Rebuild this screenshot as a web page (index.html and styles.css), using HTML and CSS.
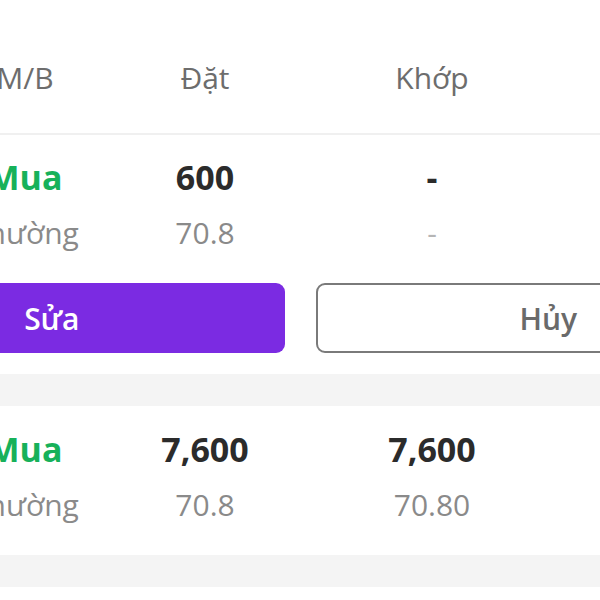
FILE: index.html
```html
<!DOCTYPE html>
<html lang="vi">
<head>
    <meta charset="UTF-8">
    <meta name="viewport" content="width=device-width, initial-scale=1.0">
    <title>Sổ lệnh</title>
    <link rel="stylesheet" href="styles.css">
</head>
<body>
    <div class="screen">
        <div class="row head">
            <div class="cell">M/B</div>
            <div class="cell">Đặt</div>
            <div class="cell">Khớp</div>
            <div class="cell"></div>
        </div>

        <div class="order">
            <div class="row">
                <div class="cell">
                    <div class="main buy">Mua</div>
                    <div class="sub">Thường</div>
                </div>
                <div class="cell">
                    <div class="main">600</div>
                    <div class="sub">70.8</div>
                </div>
                <div class="cell">
                    <div class="main">-</div>
                    <div class="sub light">-</div>
                </div>
                <div class="cell"></div>
            </div>
            <div class="actions">
                <button class="btn btn-edit">Sửa</button>
                <button class="btn btn-cancel">Hủy</button>
            </div>
        </div>

        <div class="gap"></div>

        <div class="order">
            <div class="row">
                <div class="cell">
                    <div class="main buy">Mua</div>
                    <div class="sub">Thường</div>
                </div>
                <div class="cell">
                    <div class="main">7,600</div>
                    <div class="sub">70.8</div>
                </div>
                <div class="cell">
                    <div class="main">7,600</div>
                    <div class="sub">70.80</div>
                </div>
                <div class="cell"></div>
            </div>
        </div>

        <div class="gap"></div>
    </div>
</body>
</html>
```

FILE: styles.css
```css
* {
    margin: 0;
    padding: 0;
    box-sizing: border-box;
}

body {
    font-family: 'Open Sans', 'Noto Sans', sans-serif;
    background: white;
    overflow: hidden;
}

.screen {
    width: 1022px;
    margin-left: -211px;
}

.row {
    display: grid;
    grid-template-columns: 180px 180px 274px 1fr;
    padding-left: 146px;
}

.cell {
    text-align: center;
}

.head {
    padding-top: 58px;
    padding-bottom: 35px;
    border-bottom: 2px solid #f0f0f0;
    font-size: 30px;
    line-height: 40px;
    color: #6d6d6d;
}

.order {
    padding-top: 20px;
    padding-bottom: 21px;
}

.main {
    font-size: 34px;
    line-height: 44px;
    font-weight: 700;
    color: #2b2b2b;
}

.main.buy {
    color: #17b15a;
}

.sub {
    margin-top: 14px;
    font-size: 30px;
    line-height: 40px;
    color: #8a8a8a;
}

.sub.light {
    color: #b5b5b5;
}

.actions {
    display: grid;
    grid-template-columns: 1fr 1fr;
    gap: 31px;
    padding: 30px 30px 0;
}

.btn {
    height: 70px;
    border-radius: 9px;
    font-family: inherit;
    font-size: 30px;
    font-weight: 600;
}

.btn-edit {
    background: #7b2be2;
    color: white;
    border: none;
}

.btn-cancel {
    background: white;
    color: #6a6a6a;
    border: 2px solid #7a7a7a;
}

.gap {
    height: 32px;
    background: #f4f4f4;
}

.order + .gap + .order {
    padding-top: 21px;
    padding-bottom: 30px;
}
```
